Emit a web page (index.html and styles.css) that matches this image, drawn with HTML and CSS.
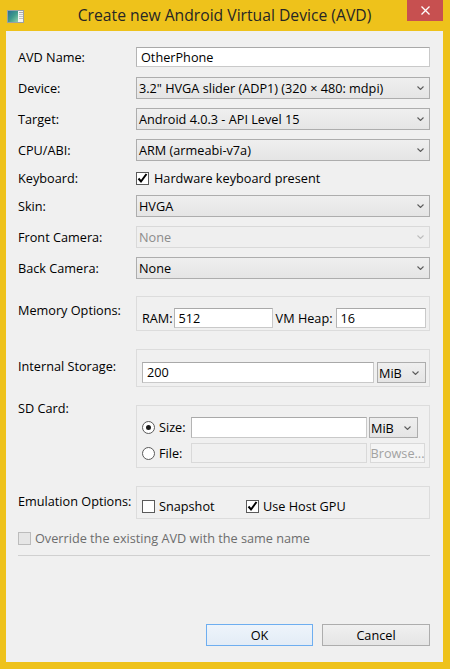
FILE: index.html
```html
<!DOCTYPE html>
<html>
<head>
<meta charset="utf-8">
<title>Create new Android Virtual Device (AVD)</title>
<link rel="stylesheet" href="styles.css">
</head>
<body>
<div class="window">
  <div class="titlebar">
    <div class="tb-left">
      <svg class="appicon" width="17" height="13" viewBox="0 0 17 13">
        <defs>
          <linearGradient id="ig" x1="0" y1="0" x2="1" y2="1">
            <stop offset="0" stop-color="#2c6f93"/>
            <stop offset="0.5" stop-color="#3e9a8c"/>
            <stop offset="1" stop-color="#8fd0a8"/>
          </linearGradient>
        </defs>
        <rect x="0.5" y="0.5" width="16" height="12" fill="#f4f4f4" stroke="#9aa0a4"/>
        <rect x="1" y="1" width="10" height="11" fill="url(#ig)"/>
        <rect x="12" y="2" width="4" height="1" fill="#a8a8a8"/>
        <rect x="12" y="4" width="4" height="1" fill="#c0c0c0"/>
        <rect x="12" y="6" width="4" height="1" fill="#c0c0c0"/>
        <rect x="12" y="8" width="4" height="1" fill="#c0c0c0"/>
      </svg>
    </div>
    <div class="title">Create new Android Virtual Device (AVD)</div>
    <div class="tb-right">
      <div class="close">
        <svg width="9" height="9" viewBox="0 0 9 9"><path d="M0.5 0.5 L8.5 8.5 M8.5 0.5 L0.5 8.5" stroke="#fff" stroke-width="1.3" fill="none"/></svg>
      </div>
    </div>
  </div>

  <div class="client">
    <div class="form">
      <div class="row">
        <span class="lbl">AVD Name:</span>
        <div class="text">OtherPhone</div>
      </div>
      <div class="row">
        <span class="lbl">Device:</span>
        <div class="combo"><span>3.2" HVGA slider (ADP1) (320 × 480: mdpi)</span><svg class="chev" width="7" height="4" viewBox="0 0 7 4"><polyline points="0.5,0.5 3.5,3.5 6.5,0.5"/></svg></div>
      </div>
      <div class="row">
        <span class="lbl">Target:</span>
        <div class="combo"><span>Android 4.0.3 - API Level 15</span><svg class="chev" width="7" height="4" viewBox="0 0 7 4"><polyline points="0.5,0.5 3.5,3.5 6.5,0.5"/></svg></div>
      </div>
      <div class="row">
        <span class="lbl">CPU/ABI:</span>
        <div class="combo"><span>ARM (armeabi-v7a)</span><svg class="chev" width="7" height="4" viewBox="0 0 7 4"><polyline points="0.5,0.5 3.5,3.5 6.5,0.5"/></svg></div>
      </div>
      <div class="row short">
        <span class="lbl">Keyboard:</span>
        <label class="check"><span class="cb"><svg width="11" height="11" viewBox="0 0 11 11"><polyline points="1.5,5.5 4,8.5 9.5,1"/></svg></span><span>Hardware keyboard present</span></label>
      </div>
      <div class="row">
        <span class="lbl">Skin:</span>
        <div class="combo"><span>HVGA</span><svg class="chev" width="7" height="4" viewBox="0 0 7 4"><polyline points="0.5,0.5 3.5,3.5 6.5,0.5"/></svg></div>
      </div>
      <div class="row">
        <span class="lbl">Front Camera:</span>
        <div class="combo disabled"><span>None</span><svg class="chev" width="7" height="4" viewBox="0 0 7 4"><polyline points="0.5,0.5 3.5,3.5 6.5,0.5"/></svg></div>
      </div>
      <div class="row">
        <span class="lbl">Back Camera:</span>
        <div class="combo"><span>None</span><svg class="chev" width="7" height="4" viewBox="0 0 7 4"><polyline points="0.5,0.5 3.5,3.5 6.5,0.5"/></svg></div>
      </div>

      <div class="grow">
        <span class="lbl lbl-mem">Memory Options:</span>
        <div class="group g-mem">
          <span class="ilbl">RAM:</span>
          <div class="text">512</div>
          <span class="ilbl vm">VM Heap:</span>
          <div class="text">16</div>
        </div>
      </div>

      <div class="grow">
        <span class="lbl lbl-int">Internal Storage:</span>
        <div class="group g-int">
          <div class="text tall">200</div>
          <div class="combo small"><span>MiB</span><svg class="chev" width="7" height="4" viewBox="0 0 7 4"><polyline points="0.5,0.5 3.5,3.5 6.5,0.5"/></svg></div>
        </div>
      </div>

      <div class="grow">
        <span class="lbl lbl-sd">SD Card:</span>
        <div class="group g-sd">
          <label class="radio-item"><span class="radio on"></span><span>Size:</span></label>
          <div class="text tall"></div>
          <div class="combo small"><span>MiB</span><svg class="chev" width="7" height="4" viewBox="0 0 7 4"><polyline points="0.5,0.5 3.5,3.5 6.5,0.5"/></svg></div>
          <label class="radio-item"><span class="radio"></span><span>File:</span></label>
          <div class="text off"></div>
          <div class="btn browse">Browse...</div>
        </div>
      </div>

      <div class="grow">
        <span class="lbl lbl-emu">Emulation Options:</span>
        <div class="group g-emu">
          <label class="check snap"><span class="cb"></span><span>Snapshot</span></label>
          <label class="check"><span class="cb"><svg width="11" height="11" viewBox="0 0 11 11"><polyline points="1.5,5.5 4,8.5 9.5,1"/></svg></span><span>Use Host GPU</span></label>
        </div>
      </div>
    </div>

    <label class="check override"><span class="cb dis"></span><span>Override the existing AVD with the same name</span></label>
    <div class="sep"></div>

    <div class="buttons">
      <div class="btn push default">OK</div>
      <div class="btn push">Cancel</div>
    </div>
  </div>
</div>
</body>
</html>
```

FILE: styles.css
```css
* { box-sizing: border-box; }
html, body { margin: 0; padding: 0; }
body {
  width: 450px;
  height: 669px;
  font-family: "Open Sans", "Noto Sans", "DejaVu Sans", sans-serif;
  font-size: 12.7px;
  color: #000;
  overflow: hidden;
}

.window {
  width: 450px;
  height: 669px;
  background: #eec21b;
  padding: 0 7px 7px 6px;
  display: flex;
  flex-direction: column;
}

/* title bar */
.titlebar {
  height: 31px;
  flex: none;
  display: grid;
  grid-template-columns: 1fr auto 1fr;
  align-items: start;
}
.tb-left { display: flex; }
.appicon { display: block; margin: 10px 0 0 1px; }
.title {
  font-size: 15.7px;
  line-height: 31px;
  color: #262626;
  white-space: nowrap;
}
.tb-right { display: flex; justify-content: flex-end; }
.close {
  width: 36px;
  height: 21px;
  background: #c75050;
  display: flex;
  align-items: center;
  justify-content: center;
}
.close svg { display: block; }

/* client area */
.client {
  flex: 1;
  background: #f0f0f0;
  padding: 15px 13px 16px 12px;
  display: flex;
  flex-direction: column;
}

.form {
  display: flex;
  flex-direction: column;
  gap: 9px;
}

.row {
  display: grid;
  grid-template-columns: 118px 294px;
  align-items: center;
  height: 22px;
}
.row.short { height: 16px; }

.lbl {
  white-space: nowrap;
  line-height: 17px;
}

.text {
  height: 20px;
  background: #fff;
  border: 1px solid #adadad;
  border-color: #a9a9a9 #c9c9c9 #c9c9c9 #b4b4b4;
  padding: 0 4px;
  line-height: 18px;
  white-space: nowrap;
}
.text.tall { height: 21px; line-height: 19px; }
.text.off { background: #f0f0f0; border-color: #d9d9d9; }

.combo {
  height: 22px;
  border: 1px solid #adadad;
  background: linear-gradient(#efefef, #e5e5e5);
  display: flex;
  align-items: center;
  justify-content: space-between;
  padding: 0 5px 0 2px;
  white-space: nowrap;
}
.combo.small { height: 21px; padding: 0 6px 0 1px; }
.chev { display: block; flex: none; }
.chev polyline { fill: none; stroke: #5c5c5c; stroke-width: 1.1; }
.combo.disabled {
  border-color: #d9d9d9;
  background: #efefef;
  color: #8b8b8b;
}
.combo.disabled .chev polyline { stroke: #bdbdbd; }

/* checkboxes and radios */
.check {
  display: flex;
  align-items: center;
  gap: 4px;
  white-space: nowrap;
  line-height: 17px;
}
.cb {
  width: 13px;
  height: 13px;
  flex: none;
  border: 1px solid #5a5a5a;
  background: #fff;
  display: flex;
  align-items: center;
  justify-content: center;
}
.cb svg { display: block; }
.cb polyline { fill: none; stroke: #000; stroke-width: 2; }
.cb.dis { border-color: #bcbcbc; background: #e6e6e6; }
.row .check { gap: 5px; }

.radio-item {
  display: flex;
  align-items: center;
  gap: 4px;
  line-height: 17px;
}
.radio {
  width: 13px;
  height: 13px;
  flex: none;
  border-radius: 50%;
  border: 1px solid #5a5a5a;
  background: #fff;
  display: flex;
  align-items: center;
  justify-content: center;
}
.radio.on::after {
  content: "";
  width: 5px;
  height: 5px;
  border-radius: 50%;
  background: #1a1a1a;
}

/* group rows */
.grow {
  display: grid;
  grid-template-columns: 118px 294px;
  align-items: start;
  margin-top: 8px;
}
.grow + .grow { margin-top: 9px; }
.lbl-mem { padding-top: 6px; }
.lbl-int { padding-top: 9px; }
.lbl-sd { margin-top: -5px; }
.lbl-emu { padding-top: 7px; }

.group {
  border: 1px solid #dcdcdc;
}
.g-mem {
  height: 35px;
  padding: 11px 3px 2px 5px;
  display: grid;
  grid-template-columns: auto 99px auto 1fr;
  align-items: center;
}
.ilbl { white-space: nowrap; line-height: 17px; }
.ilbl:first-child { margin-right: 1px; }
.ilbl.vm { margin: 0 3px 0 3px; }

.g-int {
  height: 38px;
  padding: 12px 3px 3px 5px;
  display: grid;
  grid-template-columns: 1fr 49px;
  column-gap: 3px;
}

.g-sd {
  height: 63px;
  padding: 11px 3px 4px 5px;
  display: grid;
  grid-template-columns: 47px 176px 1fr;
  grid-template-rows: 21px 20px;
  column-gap: 2px;
  row-gap: 5px;
  align-items: center;
}
.g-sd .text { height: 21px; }
.g-sd .text.off { height: 20px; }
.g-sd .combo.small { width: 49px; }

.g-emu {
  height: 33px;
  padding: 12px 3px 5px 5px;
  display: flex;
  align-items: flex-start;
}
.g-emu .check { height: 14px; }
.snap { width: 104px; }

/* buttons */
.btn {
  display: flex;
  align-items: center;
  justify-content: center;
  white-space: nowrap;
}
.browse {
  width: 55px;
  height: 20px;
  margin-left: 1px;
  border: 1px solid #d9d9d9;
  background: #f4f4f4;
  color: #a2a2a2;
}

.override {
  margin-top: 12px;
  color: #6d6d6d;
  height: 14px;
}
.sep {
  margin-top: 10px;
  height: 1px;
  background: #d0d0d0;
}

.buttons {
  margin-top: auto;
  display: flex;
  justify-content: flex-end;
  gap: 9px;
}
.push {
  width: 108px;
  height: 22px;
  border: 1px solid #adadad;
  background: linear-gradient(#f0f0f0, #e5e5e5);
}
.push.default {
  width: 107px;
  border-color: #6eaef0;
  background: linear-gradient(#eef4fb, #e3ecf6);
}
```
